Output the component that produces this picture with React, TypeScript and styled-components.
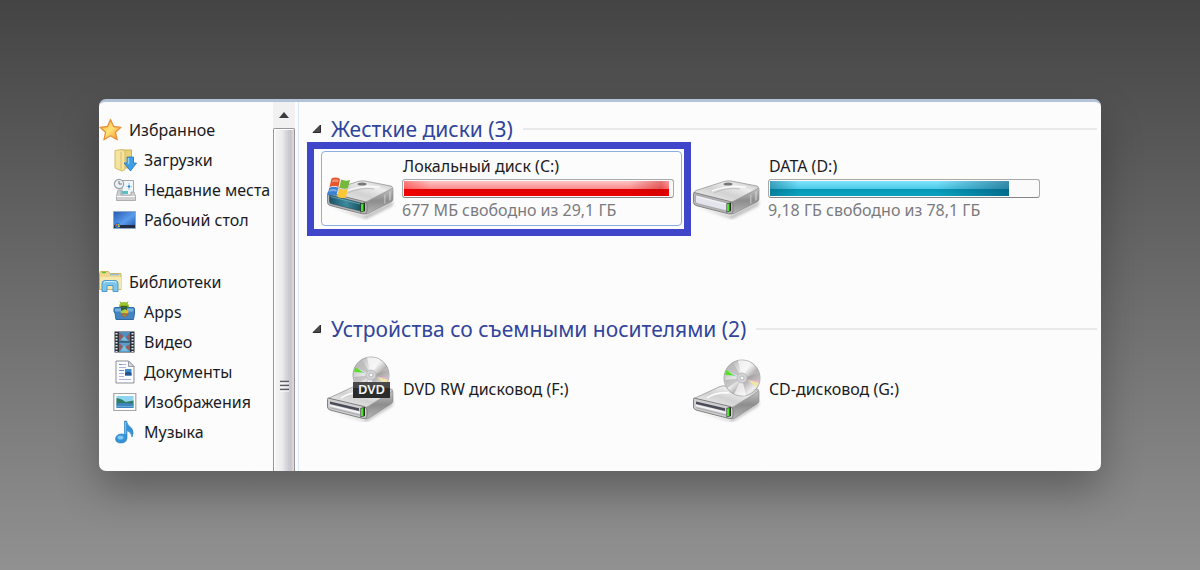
import React from 'react';
import styled, { createGlobalStyle, css } from 'styled-components';

const GlobalStyle = createGlobalStyle`
  *, *::before, *::after { box-sizing: border-box; }
  body {
    margin: 0;
    font-family: "Noto Sans", "Open Sans", sans-serif;
    background: #8f8f8f;
  }
`;

const Page = styled.main`
  min-height: 100vh;
  padding: 99px;
  background: linear-gradient(180deg, #444444 0%, #919191 100%);
`;

const Explorer = styled.div`
  display: flex;
  overflow: hidden;
  border-top: 3px solid #b5c3d8;
  border-radius: 7px;
  background: #fcfcfc;
  box-shadow: 0 20px 40px rgba(0, 0, 0, 0.28);
`;

const Sidebar = styled.nav`
  flex: 0 0 174px;
  display: flex;
  flex-direction: column;
  gap: 32px;
  padding: 13px 0 24px;
`;

const TreeGroup = styled.div`
  display: flex;
  flex-direction: column;
`;

const TreeLink = styled.a<{ $child?: boolean }>`
  display: flex;
  align-items: center;
  gap: ${(p) => (p.$child ? 7 : 6)}px;
  height: 30px;
  padding-left: ${(p) => (p.$child ? 14 : 0)}px;
  color: #1b1b1f;
  font-size: 16px;
  line-height: 24px;
  white-space: nowrap;
  text-decoration: none;

  svg { flex: none; }
`;

const ScrollTrack = styled.div`
  flex: 0 0 22px;
  display: flex;
  flex-direction: column;
  background: #f1f1f2;
`;

const ScrollUp = styled.button`
  display: flex;
  align-items: center;
  justify-content: center;
  height: 26px;
  padding: 0;
  border: 0;
  background: transparent;
`;

const ScrollThumb = styled.div`
  flex: 1;
  display: flex;
  flex-direction: column;
  align-items: center;
  justify-content: flex-end;
  padding-bottom: 79px;
  border: 1px solid #97979b;
  border-bottom: 0;
  border-radius: 2px 2px 0 0;
  box-shadow: inset 1px 1px 0 #ffffff;
  background: linear-gradient(90deg, #f6f6f6 0%, #ececee 40%, #c9c9cf 75%, #c6c6cc 85%, #dcdce0 100%);
`;

const Content = styled.section`
  flex: 1;
  min-width: 0;
  margin-left: 3px;
  padding: 14px 4px 0 12px;
  border-left: 1px solid #dce8f8;
`;

const Group = styled.section`
  & + & { margin-top: 90px; }
`;

const GroupHeader = styled.header`
  display: flex;
  align-items: center;
  gap: 10px;
  height: 26px;

  &::after {
    content: "";
    flex: 1;
    height: 2px;
    background: #e9e9eb;
  }
`;

const GroupToggle = styled.button`
  display: flex;
  align-items: center;
  gap: 9px;
  padding: 0;
  border: 0;
  background: transparent;
  color: #30459b;
  font-family: inherit;
  font-size: 21px;
  line-height: 26px;
  white-space: nowrap;
`;

const Tiles = styled.div`
  display: grid;
  grid-template-columns: repeat(auto-fill, 361px);
  gap: 5px;
  padding: 9px 0 0 10px;
`;

const Tile = styled.button<{ $marked?: boolean }>`
  position: relative;
  display: flex;
  align-items: center;
  gap: 7px;
  height: 75px;
  padding: 0 7px 0 4px;
  border: 1px solid ${(p) => (p.$marked ? '#8aaede' : 'transparent')};
  border-radius: 4px;
  background: transparent;
  font-family: inherit;
  text-align: left;

  svg { flex: none; }

  ${(p) =>
    p.$marked &&
    css`
      &::after {
        content: "";
        position: absolute;
        inset: -10px -10px -11px -15px;
        border: 7px solid #4046c9;
        pointer-events: none;
      }
    `}
`;

const DriveFigure = styled.span`
  display: flex;
  padding-top: 18px;
`;

const TileBody = styled.span`
  flex: 1;
  display: flex;
  flex-direction: column;
  gap: 1px;
  padding-bottom: 2px;
`;

const TileName = styled.span`
  padding-left: 1px;
  color: #1b1b1f;
  font-size: 16px;
  line-height: 24px;
  white-space: nowrap;
`;

const TileNote = styled.span`
  color: #7b7b7f;
  font-size: 16px;
  line-height: 22px;
  white-space: nowrap;
`;

const Meter = styled.span`
  display: block;
  height: 19px;
  padding: 1px;
  border: 1px solid #a9a9ab;
  border-bottom-color: #858587;
  border-radius: 3px;
  background: #fafafa;
`;

const MeterFill = styled.span<{ $tone: 'red' | 'blue' }>`
  display: block;
  height: 100%;
  background: ${(p) =>
    p.$tone === 'red'
      ? `linear-gradient(90deg, rgba(255,0,0,.35), transparent 10%, transparent 85%, rgba(190,0,0,.4) 97%, rgba(255,0,0,.2)),
         linear-gradient(180deg, #ffc4c4 0%, #fb8d8d 50%, #df0202 54%, #ec0000 100%)`
      : `linear-gradient(90deg, rgba(0,90,120,.45), transparent 12%, transparent 70%, rgba(0,60,95,.5)),
         linear-gradient(180deg, #7fe3fb 0%, #4fcbe9 50%, #0595b3 54%, #0ba4c2 100%)`};
`;

const StarIcon = () => (
  <svg width="24" height="24" viewBox="0 0 24 24">
    <defs>
      <linearGradient id="star" x1="0" y1="0" x2="1" y2="1">
        <stop offset="0" stopColor="#ffab30" />
        <stop offset=".5" stopColor="#ffe27a" />
        <stop offset="1" stopColor="#f58a12" />
      </linearGradient>
    </defs>
    <path d="M11.500 1.500l3 7 7.500.8-5.600 5 1.800 7.500-6.700-4-6.600 4 1.700-7.500L1 9.300l7.500-.8z" fill="url(#star)" stroke="#e8903a" strokeWidth="1.300" strokeLinejoin="round" />
  </svg>
);

const DownloadsIcon = () => (
  <svg width="24" height="24" viewBox="0 0 24 24">
    <path d="M9 2h9.500v18H9z" fill="#e8d27a" stroke="#cdb058" />
    <path d="M2 2.500l7-1 3 2v18l-3 1.500-7-3z" fill="#f5e3a0" stroke="#d5bb66" />
    <path d="M8 3.500v18" stroke="#d8bd62" />
    <path d="M14 9h6.500v6h3L17.500 23 11 15h3z" fill="#3f9fe6" stroke="#2674bd" strokeWidth=".8" />
    <path d="M15.500 10v6" stroke="#8fd0f8" strokeWidth="1.500" />
  </svg>
);

const RecentIcon = () => (
  <svg width="24" height="24" viewBox="0 0 24 24">
    <path d="M9 2.500h11.500v15H9z" fill="#f2f6f9" stroke="#a3a7ab" />
    <path d="M16 5v7M13 8.500h6" stroke="#9fd0ee" strokeWidth="1.200" />
    <path d="M15 7.500h2v2h-2z" fill="#1f83d2" />
    <path d="M5 12h3v5h10v-3h3l1.500 4v4.500h-19V18z" fill="#d0d0d1" stroke="#9d9fa1" strokeWidth=".8" />
    <path d="M3.500 18.500h18.500" stroke="#f8f8f8" />
    <path d="M9 13h6v3H9z" fill="#5ac0c2" />
    <circle cx="6" cy="6" r="4.600" fill="#edf0f3" stroke="#9aa2aa" strokeWidth="1.200" />
    <path d="M6 3v3h3" fill="none" stroke="#6f7880" />
  </svg>
);

const DesktopIcon = () => (
  <svg width="24" height="24" viewBox="0 0 24 24">
    <defs>
      <linearGradient id="desk" x1="0" y1="0" x2="1" y2="1">
        <stop offset="0" stopColor="#2558b0" />
        <stop offset=".55" stopColor="#5b9cec" />
        <stop offset="1" stopColor="#1d4da6" />
      </linearGradient>
    </defs>
    <path d="M.5 3.500h22v17H.5z" fill="url(#desk)" stroke="#8fa9c9" />
    <path d="M1 17h21v3H1z" fill="#222d42" />
    <circle cx="4.500" cy="17.500" r="2.700" fill="#2b73c7" />
    <path d="M3 16h1.500v1.500H3z" fill="#f0643c" />
    <path d="M5 16h1.500v1.500H5z" fill="#8fd052" />
    <path d="M5 18h1.500v1H5z" fill="#f8d548" />
  </svg>
);

const LibrariesIcon = () => (
  <svg width="24" height="24" viewBox="0 0 24 24">
    <path d="M.5 3.500l1-2h8l1.500 2h11v16H.5z" fill="#efd88e" stroke="#d3b65f" />
    <path d="M3 2.500h4" stroke="#63c03c" strokeWidth="1.500" />
    <path d="M11 4.500h9" stroke="#8dbce6" strokeWidth="1.500" />
    <path d="M1 7h21v12H1z" fill="#f7e8b0" />
    <path d="M3 21.500v-8q0-3 3-3h10q3 0 3 3v8h-5v-6H8v6z" fill="#7cc5ec" stroke="#4d9bcd" />
    <path d="M5 13q0-1.500 1.500-1.500h9q1.500 0 1.500 1.500" fill="none" stroke="#d3f0fb" />
  </svg>
);

const AppsIcon = () => (
  <svg width="24" height="24" viewBox="0 0 24 24">
    <path d="M6 7q0-5 5-5t5 5z" fill="#9dc72a" />
    <path d="M7 1.500l1.500 2M15 1.500l-1.500 2" stroke="#7da51d" />
    <path d="M7.500 6.500h7" stroke="#446116" strokeWidth="1.500" />
    <path d="M2 7.500h18q1.500 0 1.500 1.500v4l-1 6.500H3L2 13 1 12V9q0-1.500 1-1.500z" fill="#4386bf" stroke="#2f699f" strokeLinejoin="round" />
    <path d="M2 8.500h18.500v3H2z" fill="#74b1dc" />
    <path d="M8 7.500h6v3H8z" fill="#315b28" />
    <path d="M7 12l5-3v6z" fill="#a7d33a" />
    <path d="M12 9l4 3-4 3z" fill="#f2b92d" />
    <path d="M7.500 14l4 3.500 4-3.500-4-1z" fill="#c95430" />
    <path d="M9.500 14.500l2 2 2-2" fill="#5bb63a" />
  </svg>
);

const VideoIcon = () => (
  <svg width="24" height="24" viewBox="0 0 24 24">
    <path d="M1.500 1.500h20v21h-20z" fill="#2c333a" />
    <path d="M6 2h11v9.500H6z" fill="#4b91c8" />
    <path d="M6 12.500h11V22H6z" fill="#5a9dcd" />
    <path d="M6 2l5 4.500L6 11zM17 3l-4 4 4 4.500zM6 13l4 3.500L6 22zM17 14l-5 3 5 4z" fill="#935d5c" />
    <path d="M8 10l3-4 4 5zM8 21l3-6 4 6z" fill="#79bedf" />
    <path d="M3.500 3v19M19.500 3v19" stroke="#e3e7e9" strokeWidth="2" strokeDasharray="1.500 1.500" />
  </svg>
);

const DocumentIcon = () => (
  <svg width="24" height="24" viewBox="0 0 24 24">
    <path d="M3 1h12.500L21 6.500V23H3z" fill="#fcfcff" stroke="#8c8f98" />
    <path d="M15.500 1v5.500H21z" fill="#d6dae1" stroke="#979ba4" />
    <path d="M6 4.500h7M6 7.500h7M6 13.500h5M6 16.500h5M6 19.500h12" stroke="#aeb5e0" />
    <path d="M6 4.500h3M6 10.500h5" stroke="#6c99ba" />
    <path d="M12 9h6.500v6.500H12z" fill="#3d8dd2" />
    <path d="M12 13q3-3 6.500 0v2.500H12z" fill="#27548c" />
  </svg>
);

const PicturesIcon = () => (
  <svg width="24" height="24" viewBox="0 0 24 24">
    <path d="M.8 3.500h22v17H.8z" fill="#fdfdfd" stroke="#a3a5a9" strokeWidth="1.200" />
    <path d="M3.500 6h17v12h-17z" fill="#8fd5f2" />
    <path d="M3.500 8q6 1 9 4l8-1.500V15h-17z" fill="#2f7c62" />
    <path d="M3.500 13.500q8-1 17 .5v4h-17z" fill="#3e86bf" />
    <path d="M3.500 16.500h17" stroke="#67abd6" />
  </svg>
);

const MusicIcon = () => (
  <svg width="24" height="24" viewBox="0 0 24 24">
    <path d="M11.500 1h2q.5 4 5 7 3 4 .5 9-.5-5-5-6.500v7.500q-.5 5-6 5-5.500 0-5.500-4.500 1-4.500 6-4.500 1.500 0 3 .5z" fill="#3592d8" stroke="#2a7cbb" strokeWidth=".6" />
    <path d="M12.700 2v12" stroke="#85c7f0" />
    <ellipse cx="7.500" cy="17.500" rx="3" ry="2" fill="#7cc8f5" />
  </svg>
);

const Metal = ({ id }: { id: string }) => (
  <defs>
    <linearGradient id={`${id}-top`} x1="0" y1="1" x2="1" y2="0">
      <stop offset="0" stopColor="#f4f4f4" />
      <stop offset=".45" stopColor="#d2d2d2" />
      <stop offset=".7" stopColor="#ededed" />
      <stop offset="1" stopColor="#b4b4b4" />
    </linearGradient>
    <linearGradient id={`${id}-side`} x1="0" y1="0" x2="0" y2="1">
      <stop offset="0" stopColor="#c4c4c4" />
      <stop offset=".5" stopColor="#8d8d8d" />
      <stop offset="1" stopColor="#b6b6b6" />
    </linearGradient>
    <linearGradient id={`${id}-disc`} x1="0" y1="0" x2="1" y2="1">
      <stop offset="0" stopColor="#a9a9a9" />
      <stop offset=".25" stopColor="#cfcfcf" />
      <stop offset=".45" stopColor="#f1f1f1" />
      <stop offset=".6" stopColor="#b5b1b1" />
      <stop offset=".8" stopColor="#efefef" />
      <stop offset="1" stopColor="#a8a8a8" />
    </linearGradient>
    <linearGradient id={`${id}-teal`} x1="0" y1="0" x2="1" y2="0">
      <stop offset="0" stopColor="#1d5367" />
      <stop offset=".5" stopColor="#3b8a9f" />
      <stop offset="1" stopColor="#174d55" />
    </linearGradient>
    <filter id={`${id}-soft`} x="-20%" y="-50%" width="140%" height="200%">
      <feGaussianBlur stdDeviation="1.500" />
    </filter>
  </defs>
);

const HardDriveIcon = ({ system }: { system?: boolean }) => {
  const id = system ? 'sys' : 'hdd';
  return (
    <svg width="69" height="44" viewBox="0 0 69 44">
      <Metal id={id} />
      <path d="M4 30l34 10 30-15-2 5-26 13z" fill="#777" opacity=".5" filter={`url(#${id}-soft)`} />
      <path d="M37 24L66 11.500q1 0 1 2V23q0 2-2 3L42 37.500q-3 1-5 0z" fill={`url(#${id}-side)`} stroke="#858585" strokeWidth=".6" />
      <path d="M2 17q0-1.500 2-2.500L32 5.500q4-1 7-.5l26 5q2.500 1 1 2.500L42 25q-3 1.500-6 1z" fill={`url(#${id}-top)`} stroke="#999" strokeWidth=".8" />
      <path d="M2 16.500L38 25.500q3 1 3 3.500v6q0 3.500-4 3L4 29.500q-2.500-1-2.500-3V18q0-1 .5-1.500z" fill="#b5b5b5" stroke="#7c7c7c" strokeWidth=".9" />
      <path d="M4 19L35 27q1.500.5 1.500 2v6.500L5 27.500q-1.500-.5-1.500-2V20q0-1 .5-1z" fill={system ? `url(#${id}-teal)` : '#e4e5ec'} stroke={system ? '#2b5361' : '#9b9b9f'} strokeWidth=".7" />
      <path d="M4.500 20.500L34 28" stroke={system ? '#72adb8' : '#fafafc'} strokeWidth=".8" />
      <path d="M34.500 27.500l4.500-1v8.500l-4.500 1.500z" fill="#222d20" />
      <path d="M35 28l2.500-.5v7.500l-2.500.7z" fill="#4ee02c" />
      <path d="M63 16l2-1v9l-2 1zM58 19l1.500-1v9l-1.500 1z" fill="#d9d9d9" opacity=".5" />
      <ellipse cx="36" cy="8" rx="4.500" ry="1.600" fill="#777" />
      <path d="M22 17q12-6 26-4" fill="none" stroke="#bebebe" />
      <path d="M20 15q16-6 34-4" fill="none" stroke="#fff" strokeWidth="1.500" opacity=".8" />
      {system && (
        <g>
          <path d="M5.500 2.500q4.500-2 8.500.5L12.500 11q-4-2-9 0z" fill="#e8552a" />
          <path d="M15 3.500q4 2 9 .5l-2 8q-4.500 1.500-8.500-.5z" fill="#76b83c" />
          <path d="M3.200 11.800q5-2 9 0l-2 8.200q-4-2-8.700-.5z" fill="#3a81d4" />
          <path d="M13.200 12.500q4 2 8.500.5L20 21.500q-4.500 1.500-8.700-.8z" fill="#fac735" />
          <path d="M6.500 3.800q3-1 6 0l-.5 2.500q-3-1-6 0zM3.800 13.500q4-1.200 7 .2l-.5 2q-3-1.200-7 0z" fill="#fff" opacity=".35" />
        </g>
      )}
    </svg>
  );
};

const Disc = ({ id, cx, cy }: { id: string; cx: number; cy: number }) => (
  <g transform={`translate(${cx} ${cy})`}>
    <circle r="18" fill={`url(#${id}-disc)`} stroke="#9b9b9b" strokeWidth=".8" />
    <path d="M0 0L-9-15.600Q-14-13-16-8.500z" fill="#b7b7b7" opacity=".7" />
    <path d="M0 0L-4-17.500Q3-18.500 9-15.500z" fill="#fafafa" opacity=".75" />
    <path d="M0 0L4 17.500Q-2 18.500-8 16z" fill="#fff" opacity=".7" />
    <path d="M0 0L17-5Q18 0 16.500 5z" fill="#9b9494" opacity=".45" />
    <path d="M0 0L-17 2Q-16.500 6-14.500 10z" fill="#9b9494" opacity=".45" />
    <path d="M-8-2.500L-17-3-15.500-8z" fill="#58df27" />
    <path d="M-5-1L-10-4.500-8-2.500z" fill="#33bdc2" />
    <path d="M6 2L16.500 4.500 14.500 9z" fill="#f2e89d" />
    <path d="M5 1.500L16.500 2.500v2z" fill="#e7b3d5" />
    <circle r="5" fill="#d4d4d8" stroke="#b4b4b8" strokeWidth=".8" />
    <circle r="2" fill="#f9f9f9" stroke="#a9a9ad" strokeWidth=".8" />
  </g>
);

const OpticalDriveIcon = ({ dvd }: { dvd?: boolean }) => {
  const id = dvd ? 'dvd' : 'cd';
  return (
    <svg width="69" height="66" viewBox="0 0 69 66">
      <Metal id={id} />
      <path d="M4 55l34 9 30-19-2 5-26 16z" fill="#777" opacity=".5" filter={`url(#${id}-soft)`} />
      <path d="M38 50L66 34.500q1 0 1 2V45q0 1.500-1.500 2.500L42 62.500q-2 1-4 0z" fill={`url(#${id}-side)`} stroke="#858585" strokeWidth=".6" />
      <path d="M2 42.500L28 30.500q3-1 6-.5l31 3q2.500.5 1 2.500L42 50.500q-3 1.500-6 1z" fill={`url(#${id}-top)`} stroke="#999" strokeWidth=".8" />
      <path d="M2 42L38 50.500q3 1 3 3.500v6q0 3-4 2.500L4 54q-2.500-1-2.500-3v-7.500q0-1 .5-1.500z" fill="#cfcfd1" stroke="#757575" strokeWidth=".9" />
      <path d="M4 45.500l29 6.800v2.700L4 48z" fill="#4a4d58" />
      <path d="M4 49.500l30 7.200" stroke="#f7f7f7" strokeWidth="1.500" />
      <path d="M4 51.700l30 7.500" stroke="#999ca5" strokeWidth=".8" />
      <path d="M34.500 52l4.500-1v9l-4.500 1.500z" fill="#213020" />
      <path d="M35 52.500l2.500-.5v8l-2.500.7z" fill="#4ee02c" />
      <path d="M15 42q9-6 22-5" fill="none" stroke="#fff" strokeWidth="1.500" />
      <Disc id={id} cx={dvd ? 45 : 50} cy={dvd ? 19 : 22} />
      {dvd && (
        <g>
          <path d="M27 26h37v16H27z" fill="#2b2b2b" />
          <path d="M27 26h37v6H27z" fill="#484848" />
          <text x="45.500" y="38" textAnchor="middle" fill="#f4f4f4" fontFamily="Noto Sans, sans-serif" fontSize="13" fontWeight="600">DVD</text>
        </g>
      )}
    </svg>
  );
};

const ExpandedMark = () => (
  <svg width="11" height="10" viewBox="0 0 11 10" aria-hidden="true">
    <path d="M9.500 1v7.500H2z" fill="#4a4a4a" stroke="#2b2b2b" strokeLinejoin="round" />
  </svg>
);

const Grip = () => (
  <svg width="11" height="12" viewBox="0 0 11 12" aria-hidden="true">
    <path d="M1 1.500h9M1 5.500h9M1 9.500h9" stroke="#5c5c60" strokeWidth="1.500" />
    <path d="M1 3h9M1 7h9M1 11h9" stroke="#fff" />
  </svg>
);

const tree = [
  {
    name: 'Избранное',
    icon: <StarIcon />,
    items: [
      { name: 'Загрузки', icon: <DownloadsIcon /> },
      { name: 'Недавние места', icon: <RecentIcon /> },
      { name: 'Рабочий стол', icon: <DesktopIcon /> },
    ],
  },
  {
    name: 'Библиотеки',
    icon: <LibrariesIcon />,
    items: [
      { name: 'Apps', icon: <AppsIcon /> },
      { name: 'Видео', icon: <VideoIcon /> },
      { name: 'Документы', icon: <DocumentIcon /> },
      { name: 'Изображения', icon: <PicturesIcon /> },
      { name: 'Музыка', icon: <MusicIcon /> },
    ],
  },
];

type DiskProps = { name: string; note: string; used: number; tone: 'red' | 'blue'; system?: boolean };

const DiskTile = ({ name, note, used, tone, system }: DiskProps) => (
  <Tile type="button" $marked={system}>
    <DriveFigure><HardDriveIcon system={system} /></DriveFigure>
    <TileBody>
      <TileName>{name}</TileName>
      <Meter role="meter" aria-label={name} aria-valuenow={used} aria-valuemin={0} aria-valuemax={100}>
        <MeterFill $tone={tone} style={{ width: `${used}%` }} />
      </Meter>
      <TileNote>{note}</TileNote>
    </TileBody>
  </Tile>
);

export default function App() {
  return (
    <>
      <GlobalStyle />
      <Page>
        <Explorer>
          <Sidebar>
            {tree.map((group) => (
              <TreeGroup key={group.name}>
                <TreeLink href="#">{group.icon}{group.name}</TreeLink>
                {group.items.map((item) => (
                  <TreeLink key={item.name} href="#" $child>{item.icon}{item.name}</TreeLink>
                ))}
              </TreeGroup>
            ))}
          </Sidebar>
          <ScrollTrack>
            <ScrollUp type="button" aria-label="Прокрутить вверх">
              <svg width="10" height="6" viewBox="0 0 10 6"><path d="M5 0l5 6H0z" fill="#3c3c40" /></svg>
            </ScrollUp>
            <ScrollThumb><Grip /></ScrollThumb>
          </ScrollTrack>
          <Content>
            <Group>
              <GroupHeader>
                <GroupToggle type="button" aria-expanded><ExpandedMark />Жесткие диски (3)</GroupToggle>
              </GroupHeader>
              <Tiles>
                <DiskTile name="Локальный диск (C:)" note="677 МБ свободно из 29,1 ГБ" used={99} tone="red" system />
                <DiskTile name="DATA (D:)" note="9,18 ГБ свободно из 78,1 ГБ" used={89} tone="blue" />
              </Tiles>
            </Group>
            <Group>
              <GroupHeader>
                <GroupToggle type="button" aria-expanded><ExpandedMark />Устройства со съемными носителями (2)</GroupToggle>
              </GroupHeader>
              <Tiles>
                <Tile type="button"><OpticalDriveIcon dvd /><TileName>DVD RW дисковод (F:)</TileName></Tile>
                <Tile type="button"><OpticalDriveIcon /><TileName>CD-дисковод (G:)</TileName></Tile>
              </Tiles>
            </Group>
          </Content>
        </Explorer>
      </Page>
    </>
  );
}
